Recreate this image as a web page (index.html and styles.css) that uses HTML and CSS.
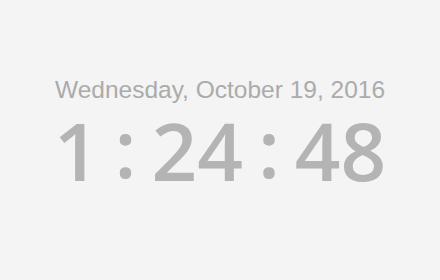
FILE: index.html
```html
<!DOCTYPE html>
<html>
<head>
  <meta charset="UTF-8">
  <title>Clock</title>
  <link rel="stylesheet" href="styles.css">
</head>
<body>
  <div class="clock">
    <div class="date">Wednesday, October 19, 2016</div>
    <div class="time">1<span class="sep">:</span>24<span class="sep">:</span>48</div>
  </div>
</body>
</html>
```

FILE: styles.css
```css
html, body { margin: 0; height: 100%; }
body { background: #f4f4f4; display: flex; align-items: center; justify-content: center; }
.clock { text-align: center; margin-top: -15px; }
.date { font-family: "Liberation Sans", Arial, sans-serif; font-size: 24.5px; color: #ababab; line-height: 28px; }
.time { font-family: "Open Sans", sans-serif; font-size: 80px; font-weight: 600; color: #b4b4b4; line-height: 80px; margin-top: 3px; }
.sep { margin: 0 15px; vertical-align: 3px; }
```
